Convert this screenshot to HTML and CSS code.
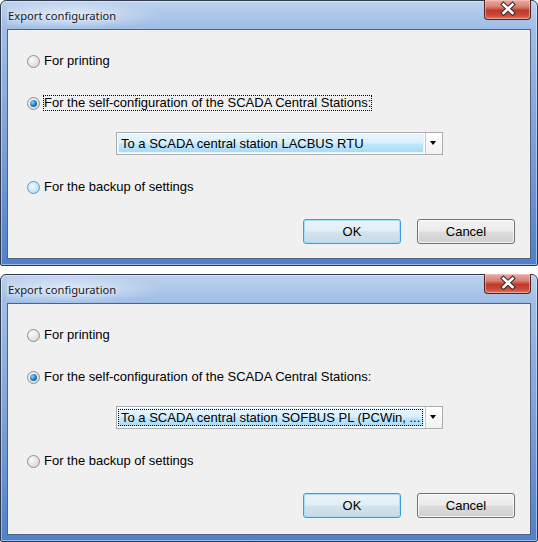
FILE: index.html
```html
<!DOCTYPE html>
<html>
<head>
  <title>Export configuration</title>
  <link rel="stylesheet" href="styles.css">
</head>
<body>

  <div class="window short">
    <div class="titlebar">
      <span class="title">Export configuration</span>
      <div class="close">
        <svg width="47" height="20" viewBox="0 0 47 20" xmlns="http://www.w3.org/2000/svg">
          <path d="M19.5 5.5L28.5 14M28.5 5.5L19.5 14" stroke="#3b2a2a" stroke-width="4.6" stroke-linecap="square"></path>
          <path d="M19.5 5.5L28.5 14M28.5 5.5L19.5 14" stroke="#ffffff" stroke-width="2.6" stroke-linecap="square"></path>
        </svg>
      </div>
    </div>
    <div class="client">
      <div class="option">
        <span class="radio"></span>
        <span class="label">For printing</span>
      </div>
      <div class="option gap-big">
        <span class="radio checked"></span>
        <span class="label focus">For the self-configuration of the SCADA Central Stations:</span>
      </div>
      <div class="combo">
        <div class="combo-value"><span>To a SCADA central station LACBUS RTU</span></div>
        <div class="combo-arrow"></div>
      </div>
      <div class="option gap-combo">
        <span class="radio hover"></span>
        <span class="label">For the backup of settings</span>
      </div>
      <div class="buttons">
        <div class="btn default">OK</div>
        <div class="btn">Cancel</div>
      </div>
    </div>
  </div>

  <div class="window">
    <div class="titlebar">
      <span class="title">Export configuration</span>
      <div class="close">
        <svg width="47" height="20" viewBox="0 0 47 20" xmlns="http://www.w3.org/2000/svg">
          <path d="M19.5 5.5L28.5 14M28.5 5.5L19.5 14" stroke="#3b2a2a" stroke-width="4.6" stroke-linecap="square"></path>
          <path d="M19.5 5.5L28.5 14M28.5 5.5L19.5 14" stroke="#ffffff" stroke-width="2.6" stroke-linecap="square"></path>
        </svg>
      </div>
    </div>
    <div class="client">
      <div class="option">
        <span class="radio"></span>
        <span class="label">For printing</span>
      </div>
      <div class="option gap-big">
        <span class="radio checked"></span>
        <span class="label">For the self-configuration of the SCADA Central Stations:</span>
      </div>
      <div class="combo">
        <div class="combo-value"><span class="focus">To a SCADA central station SOFBUS PL (PCWin, ...</span></div>
        <div class="combo-arrow"></div>
      </div>
      <div class="option gap-combo">
        <span class="radio"></span>
        <span class="label">For the backup of settings</span>
      </div>
      <div class="buttons">
        <div class="btn default">OK</div>
        <div class="btn">Cancel</div>
      </div>
    </div>
  </div>

</body>
</html>
```

FILE: styles.css
```css
body {
  margin: 0;
  padding: 0;
  background-color: #ffffff;
  font-family: "Liberation Sans", Arial, sans-serif;
  font-size: 13px;
  color: #000000;
}

.window {
  box-sizing: border-box;
  width: 538px;
  height: 268px;
  display: flex;
  flex-direction: column;
  padding: 0 6px 6px 6px;
  border: 1px solid #2f3a4c;
  border-radius: 6px 6px 2px 2px;
  background: linear-gradient(180deg, #bcd1ed 0px, #9fbde6 28px, #7aa0da 55%, #4f80c9 100%);
  box-shadow: inset 0 0 0 1px rgba(255, 255, 255, 0.45);
}

.window.short {
  height: 266px;
  margin-bottom: 8px;
}

.titlebar {
  position: relative;
  height: 28px;
  flex-shrink: 0;
  background: radial-gradient(ellipse 95px 15px at 60px 14px, rgba(255, 255, 255, 0.6), rgba(255, 255, 255, 0));
}

.title {
  position: absolute;
  left: 1px;
  top: 7px;
  font-family: "Noto Sans", "Open Sans", sans-serif;
  font-size: 11.2px;
  color: #1b1b1b;
  text-shadow: 0 0 6px rgba(255, 255, 255, 0.9);
}

.close {
  position: absolute;
  right: 0;
  top: -1px;
  width: 47px;
  height: 20px;
  border: 1px solid #4f2320;
  border-top: none;
  border-radius: 0 0 4px 4px;
  background: linear-gradient(180deg, #e9aca4 0%, #d88274 35%, #c0392b 55%, #c84a3a 80%, #de7a68 100%);
  box-shadow: inset 0 0 0 1px rgba(255, 210, 200, 0.5);
  box-sizing: border-box;
  overflow: hidden;
}

.close svg {
  display: block;
  margin: -1px 0 0 -1px;
}

.client {
  flex: 1;
  display: flex;
  flex-direction: column;
  background-color: #f0f0f0;
  border: 1px solid #4f6280;
  padding: 23px 0 0 19px;
}

.option {
  display: flex;
  align-items: center;
  height: 16px;
}

.gap-big {
  margin-top: 26px;
}

.gap-combo {
  margin-top: 24px;
}

.radio {
  box-sizing: border-box;
  width: 13px;
  height: 13px;
  border-radius: 50%;
  border: 1px solid #8f8f8f;
  background: radial-gradient(circle at 35% 35%, #fbfbfb 0%, #e6e6e6 50%, #cfcfcf 100%);
  margin-right: 3px;
  position: relative;
  flex-shrink: 0;
}

.radio.hover {
  border-color: #5e98c8;
  background: radial-gradient(circle at 40% 40%, #f1f9fe 0%, #c9e6f9 55%, #9ccbee 100%);
}

.radio.checked::after {
  content: "";
  position: absolute;
  left: 2px;
  top: 2px;
  width: 7px;
  height: 7px;
  border-radius: 50%;
  background: radial-gradient(circle at 35% 35%, #8fd1f6 0%, #2a88cc 45%, #0b3f74 100%);
}

.label {
  padding: 0;
  border: 1px solid transparent;
  line-height: 14px;
  white-space: nowrap;
}

.focus {
  border: 1px dotted #000000;
}

.combo {
  display: flex;
  width: 327px;
  height: 23px;
  margin: 21px 0 0 89px;
  border: 1px solid #acacac;
  box-sizing: border-box;
  background-color: #ffffff;
}

.combo-value {
  flex: 1;
  display: flex;
  align-items: center;
  margin: 1px 0 1px 1px;
  padding-left: 0;
  background: linear-gradient(180deg, #eaf6fd 0%, #d9f0fc 45%, #bee6fd 55%, #a7d9f5 100%);
  box-shadow: inset 0 0 0 1px #e4f3fc;
}

.combo-value span {
  padding: 0 2px 0 2px;
  line-height: 15px;
  border: 1px solid transparent;
  white-space: nowrap;
}

.combo-value span.focus {
  border: 1px dotted #000000;
}

.combo-arrow {
  width: 16px;
  border-left: 1px solid #c8c8c8;
  margin-left: 1px;
  position: relative;
  background: linear-gradient(180deg, #ffffff, #f2f2f2);
}

.combo-arrow::after {
  content: "";
  position: absolute;
  left: 4px;
  top: 8px;
  border-left: 3.5px solid transparent;
  border-right: 3.5px solid transparent;
  border-top: 4px solid #000000;
}

.buttons {
  display: flex;
  justify-content: flex-end;
  gap: 16px;
  margin-top: 24px;
  padding-right: 15px;
}

.btn {
  box-sizing: border-box;
  width: 98px;
  height: 25px;
  line-height: 23px;
  text-align: center;
  border: 1px solid #707070;
  border-radius: 3px;
  background: linear-gradient(180deg, #f2f2f2 0%, #ebebeb 49%, #dddddd 51%, #cfcfcf 100%);
  box-shadow: inset 0 0 0 1px rgba(255, 255, 255, 0.8);
}

.btn.default {
  border-color: #3c9ee0;
  box-shadow: inset 0 0 0 1px #a6def8;
  background: linear-gradient(180deg, #eaf3f8 0%, #e2eef5 49%, #d2e3ed 51%, #c6dbe7 100%);
}
```
